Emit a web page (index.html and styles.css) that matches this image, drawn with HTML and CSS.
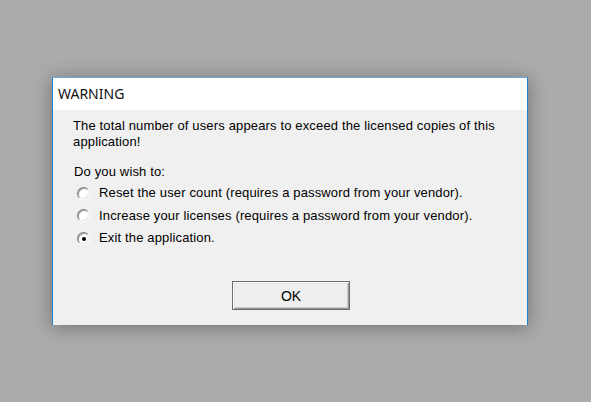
FILE: index.html
```html
<!DOCTYPE html>
<html>
<head>
<meta charset="utf-8">
<link rel="stylesheet" href="styles.css">
</head>
<body>
<div class="dialog">
  <div class="titlebar">WARNING</div>
  <div class="content">
    <p class="message">The total number of users appears to exceed the licensed copies of this<br>application!</p>
    <p class="question">Do you wish to:</p>
    <div class="options">
      <div class="option"><span class="radio"></span><span>Reset the user count (requires a password from your vendor).</span></div>
      <div class="option"><span class="radio"></span><span>Increase your licenses (requires a password from your vendor).</span></div>
      <div class="option"><span class="radio checked"></span><span>Exit the application.</span></div>
    </div>
    <div class="buttons">
      <button class="btn">OK</button>
    </div>
  </div>
</div>
</body>
</html>
```
FILE: styles.css
```css
html, body {
  margin: 0;
  padding: 0;
}
body {
  background: #ababab;
  width: 591px;
  height: 402px;
  overflow: hidden;
  padding: 77px 0 0 52px;
  box-sizing: border-box;
  font-family: "Liberation Sans", Arial, sans-serif;
}
.dialog {
  width: 476px;
  height: 248px;
  box-sizing: border-box;
  background: #f0f0f0;
  border-top: 1px solid #6fa9dc;
  border-left: 1px solid #1883d7;
  border-right: 1px solid #1883d7;
  box-shadow: 0 2px 18px rgba(0, 0, 0, 0.35);
  display: flex;
  flex-direction: column;
}
.titlebar {
  height: 32px;
  background: #ffffff;
  font-family: "Noto Sans", "Open Sans", sans-serif;
  font-size: 14px;
  color: #111;
  padding-left: 5px;
  line-height: 32px;
}
.content {
  padding: 8px 0 0 20px;
  font-size: 13px;
  letter-spacing: 0.15px;
  color: #000;
}
.message {
  margin: 0;
  line-height: 16px;
}
.question {
  margin: 14px 0 0 1px;
  line-height: 16px;
}
.options {
  display: flex;
  flex-direction: column;
  gap: 6.5px;
  margin-top: 5px;
  padding-left: 4px;
}
.option {
  display: flex;
  align-items: center;
  gap: 9px;
  line-height: 16px;
  height: 16px;
}
.radio {
  width: 11px;
  height: 11px;
  border-radius: 50%;
  background: #fff;
  box-shadow: inset 1px 1px 0 #a0a0a0, inset -1px -1px 0 #e3e3e3;
  border: 1px solid;
  border-color: #808080 #fff #fff #808080;
  position: relative;
  flex: none;
}
.radio.checked::after {
  content: "";
  position: absolute;
  left: 4px;
  top: 4px;
  width: 4px;
  height: 4px;
  border-radius: 50%;
  background: #000;
}
.buttons {
  display: flex;
  justify-content: center;
  margin-top: 35px;
  padding-right: 20px;
}
.btn {
  width: 118px;
  height: 29px;
  background: #efefef;
  border: 1px solid #6b6b6b;
  box-shadow: inset 1px 1px 0 #ffffff, inset -1px -1px 0 #9a9a9a, inset 2px 2px 0 #e3e3e3, inset -2px -2px 0 #c8c8c8;
  font-family: "Liberation Sans", Arial, sans-serif;
  font-size: 14px;
  color: #000;
  padding: 0;
  margin-left: 2px;
}
```
